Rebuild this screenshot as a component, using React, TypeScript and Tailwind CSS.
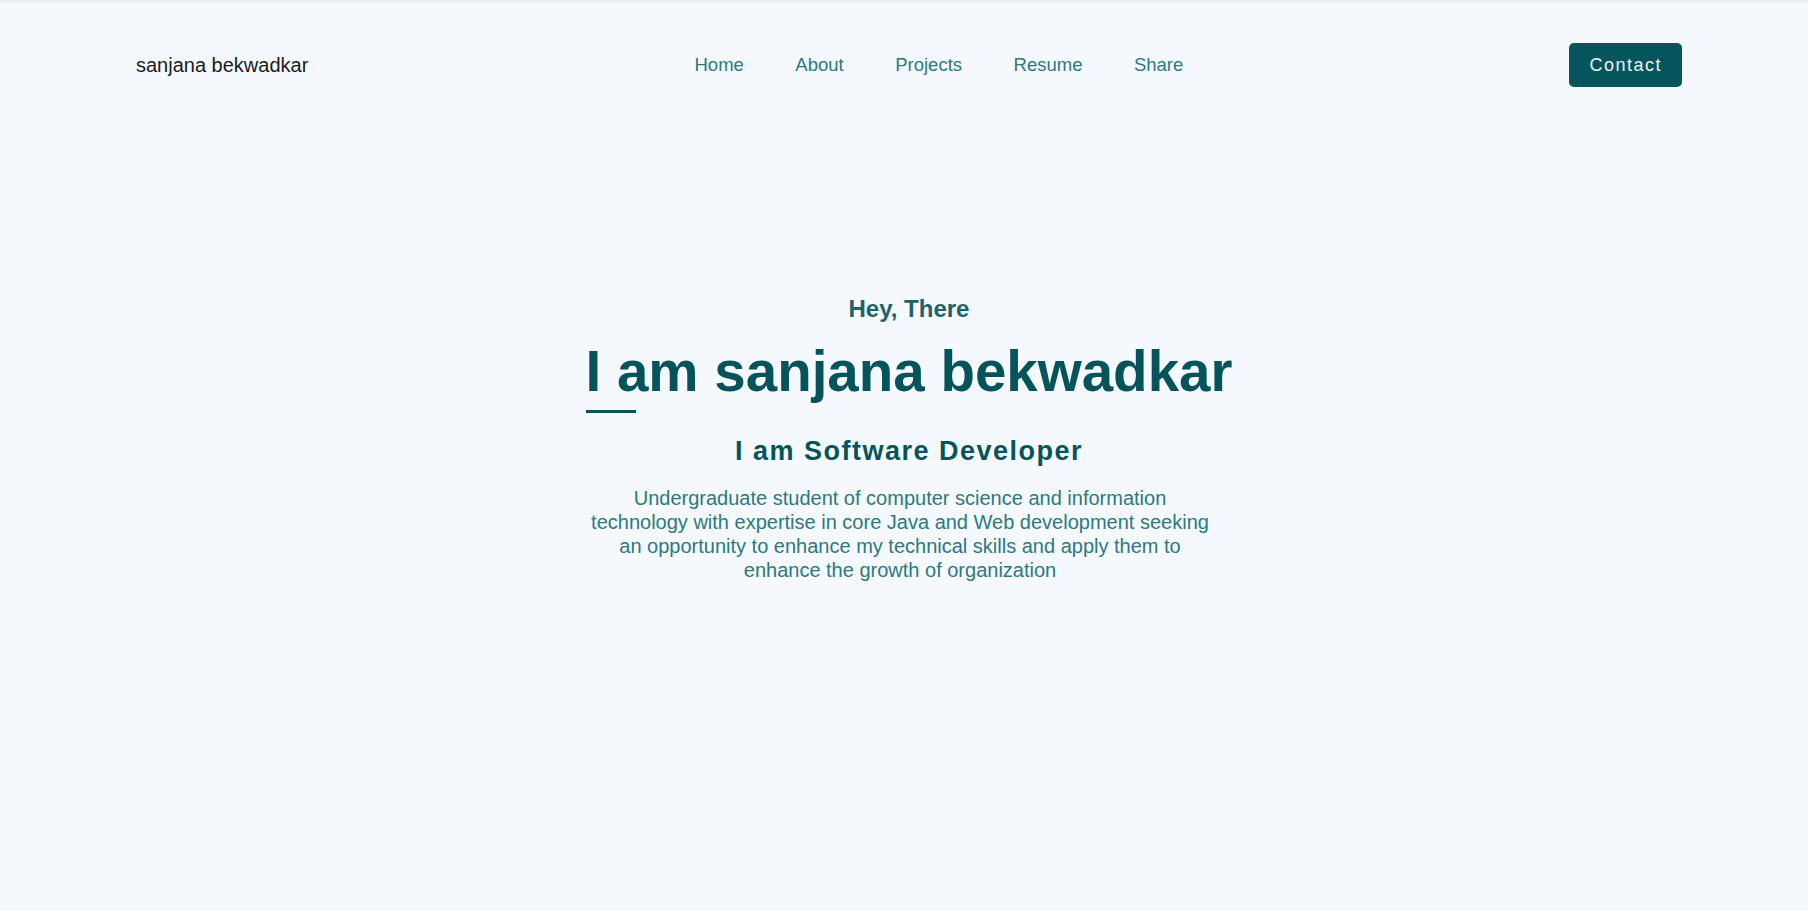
const links = ["Home", "About", "Projects", "Resume", "Share"];

function Header() {
  return (
    <header className="flex items-center justify-between pl-[136px] pr-[126px] pt-[40px]">
      <span className="text-[20px] text-[#1b1b1b]">sanjana bekwadkar</span>
      <nav className="flex items-center gap-[51.5px]">
        {links.map((label) => (
          <a key={label} href="#" className="text-[18.5px] text-[#2a7a80]">
            {label}
          </a>
        ))}
      </nav>
      <button className="h-[44px] px-[20px] rounded-[5px] bg-[#05555c] text-[18px] tracking-[1.5px] text-[#eef5f5]">
        Contact
      </button>
    </header>
  );
}

function Hero() {
  return (
    <section className="flex flex-col items-center pl-[10px] pt-[208px]">
      <p className="text-[24px] leading-[28px] font-bold text-[#1e6369]">Hey, There</p>
      <div className="mt-[17px] inline-flex flex-col items-start">
        <h1 className="text-[56.5px] leading-[64px] font-bold text-[#05545b]">
          I am sanjana bekwadkar
        </h1>
        <div className="mt-[6px] h-[3px] w-[50px] bg-[#05545b]" />
      </div>
      <h2 className="mt-[23px] text-[27px] leading-[30px] font-bold tracking-[1.5px] text-[#05545b]">
        I am Software Developer
      </h2>
      <p className="mt-[20px] mr-[18px] max-w-[625px] text-center text-[20px] leading-6 text-[#2a7a80]">
        Undergraduate student of computer science and information technology with expertise in core
        Java and Web development seeking an opportunity to enhance my technical skills and apply them
        to enhance the growth of organization
      </p>
    </section>
  );
}

export default function App() {
  return (
    <div
      className="min-h-[911px] bg-[#f5f9fe]"
      style={{ fontFamily: '"Liberation Sans", Arial, sans-serif' }}
    >
      <div className="h-[3px] bg-[#efeff2]" />
      <Header />
      <Hero />
    </div>
  );
}
